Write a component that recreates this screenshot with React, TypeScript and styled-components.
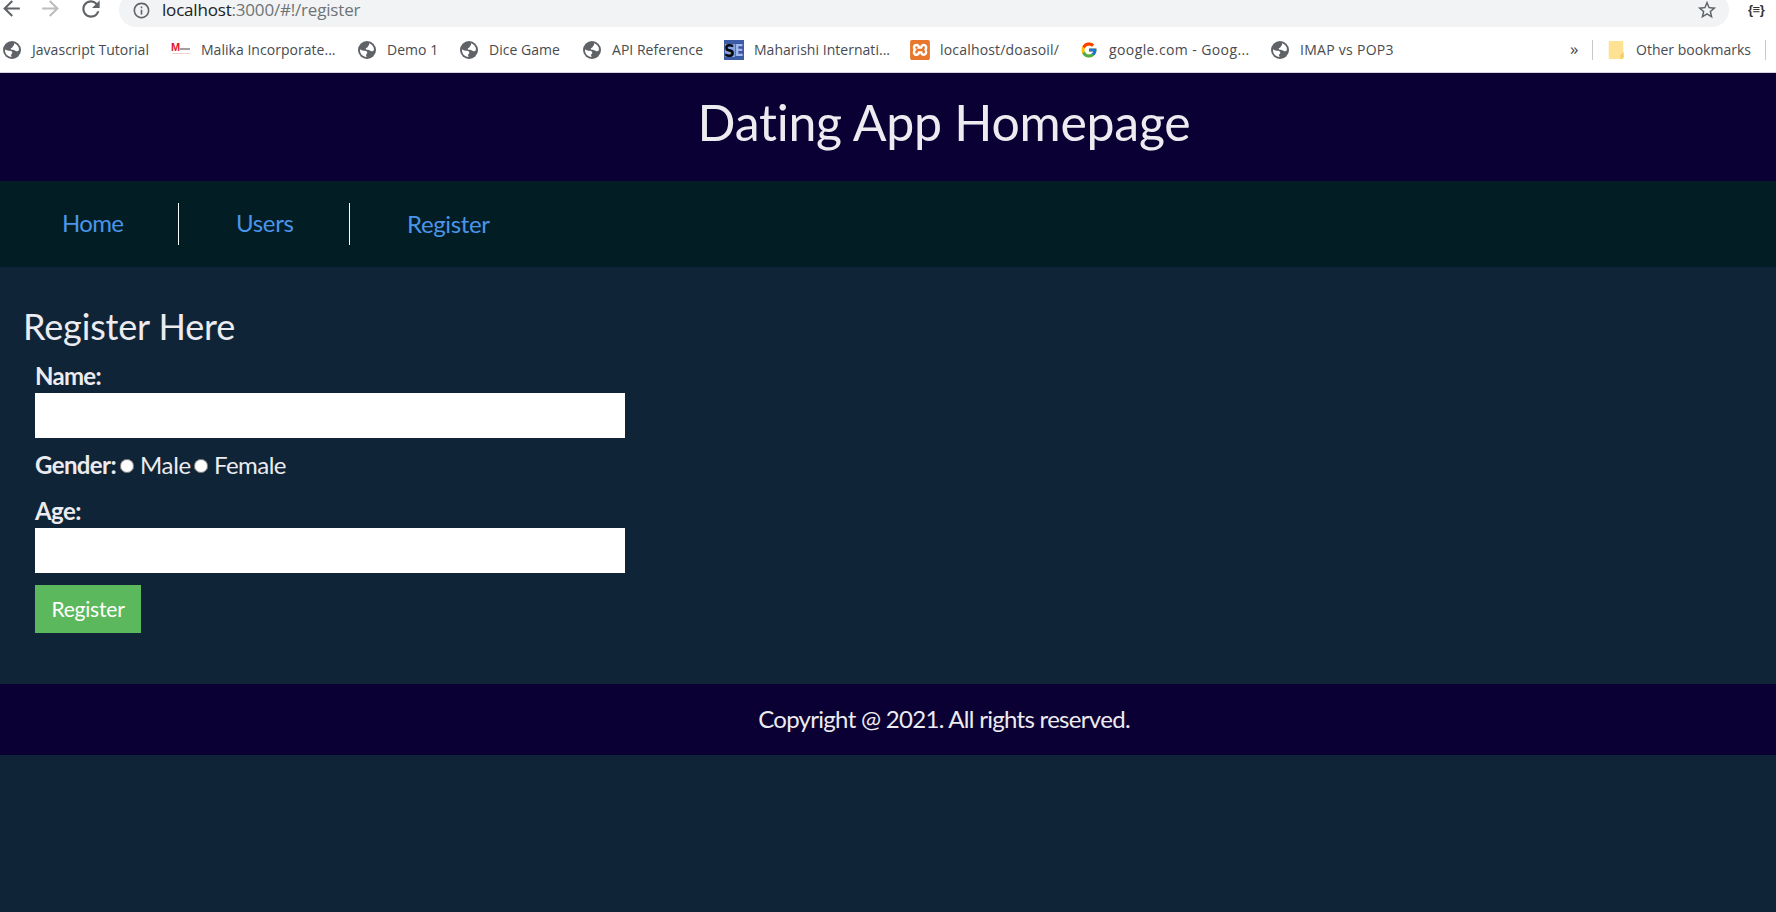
import React from 'react';
import styled, { createGlobalStyle } from 'styled-components';
import { MdArrowBack, MdArrowForward, MdInfoOutline, MdRefresh, MdStarBorder } from 'react-icons/md';
import { FcGoogle } from 'react-icons/fc';
import { SiXampp } from 'react-icons/si';

const GlobalStyle = createGlobalStyle`
  html, body {
    margin: 0;
    height: 912px;
    overflow: hidden;
    background: #102437;
  }
  *, *::before, *::after { box-sizing: border-box; }
`;

/* ---------- Browser chrome ---------- */

const Chrome = styled.div`
  height: 73px;
  background: #fff;
  border-bottom: 1px solid #d5d5e0;
  font-family: 'Open Sans', 'Liberation Sans', sans-serif;
  overflow: hidden;
`;

const Toolbar = styled.div`
  display: flex;
  align-items: center;
  height: 34px;
  margin-top: -7px;
`;

const ToolButton = styled.span<{ $width: number; $color?: string }>`
  display: flex;
  flex: 0 0 ${(p) => p.$width}px;
  padding-bottom: 3px;
  color: ${(p) => p.$color ?? '#5f6368'};

  &:first-child {
    flex-basis: 39px;
    margin-left: -1px;
  }
`;

const Omnibox = styled.div`
  display: flex;
  align-items: center;
  flex: 0 0 1610px;
  height: 34px;
  padding: 0 11px 0 13px;
  border-radius: 17px;
  background: #f1f3f4;
  color: #5f6368;
`;

const Url = styled.span`
  flex: 1;
  margin-left: 11px;
  font-size: 17px;
  line-height: 20px;
  padding-bottom: 1px;
  letter-spacing: -0.19px;
  color: #6f7377;
`;

const Host = styled.span`
  color: #202124;
`;

const Extension = styled.span`
  margin-left: 19px;
  font: bold 13px/18px 'Liberation Sans', sans-serif;
  letter-spacing: -0.5px;
  color: #333;
`;

const Bookmarks = styled.div`
  display: flex;
  align-items: center;
  height: 46px;
  padding-left: 2px;
`;

const Bookmark = styled.div<{ $width: number; $spacing?: number }>`
  display: flex;
  align-items: center;
  gap: 10px;
  flex: 0 0 ${(p) => p.$width}px;
  font-size: 14px;
  line-height: 20px;
  letter-spacing: ${(p) => p.$spacing ?? 0.03}px;
  white-space: nowrap;
  color: #484b50;
`;

const IconSlot = styled.span`
  display: flex;
  align-items: center;
  justify-content: center;
  width: 20px;
  height: 20px;
`;

const Divider = styled.span`
  width: 1px;
  height: 20px;
  background: #c6c9cd;
`;

const Overflow = styled.span`
  flex: 0 0 22px;
  font-size: 17px;
  line-height: 20px;
  padding-bottom: 3px;
  color: #45484c;
`;

const Folder = styled.div`
  display: flex;
  align-items: center;
  gap: 11px;
  margin: 0 14px 0 15px;
  font-size: 14px;
  line-height: 20px;
  white-space: nowrap;
  color: #484b50;
`;

const GlobeIcon = () => (
  <svg width="18" height="18" viewBox="0 0 18 18">
    <circle cx="9" cy="9" r="9" fill="#5f6368" />
    <path d="M11 2.300c3 .8 5 3.400 5 6.400-.8 1.700-2.700 2-4.100.9-.8-.8-1.700-1-3-.9-1.300 0-1.700-1.300-.5-1.800 1.600-.3 1.200-1.500 2-2.200.9-.5.6-1.400.6-2.400z" fill="#fff" />
    <path d="M2 8.600c1.200.3 2.200 1 3.700 1.100 1.600 0 3.300.3 3.600 1.700.2 1.200-1.200 1.500-1.300 2.700 0 .9.700 1.200.6 1.900C4.600 15.900 1.600 12.600 2 8.600z" fill="#fff" />
  </svg>
);

const MalikaIcon = () => (
  <svg width="20" height="20" viewBox="0 0 20 20">
    <text x="0" y="11" fontFamily="Liberation Sans, sans-serif" fontWeight="bold" fontSize="11" fill="#e0202b">M</text>
    <path d="M9 9h10" stroke="#8f8588" strokeWidth="1.600" />
    <path d="M1 13.500h18" stroke="#f3cfd0" strokeWidth="1" />
  </svg>
);

const SeIcon = () => (
  <svg width="20" height="20" viewBox="0 0 20 20">
    <rect width="20" height="20" fill="#3c5ca6" />
    <path d="M1 4h10v13H1z" fill="#8aa3dc" />
    <path d="M11 3h8v14h-8z" fill="#3457a8" />
    <text x="0" y="16.500" fontFamily="DejaVu Sans, sans-serif" fontWeight="bold" fontSize="17" textLength="11" lengthAdjust="spacingAndGlyphs" fill="#06080f">S</text>
    <text x="10.500" y="16" fontFamily="DejaVu Sans, sans-serif" fontWeight="bold" fontSize="16" textLength="9" lengthAdjust="spacingAndGlyphs" fill="#9fb9ee">E</text>
  </svg>
);

const FolderIcon = () => (
  <svg width="17" height="20" viewBox="0 0 17 20">
    <path d="M1.500 1h13a.8.8 0 0 1 .8.8V12h.7v5.500L14 19H1.500a.8.8 0 0 1-.8-.8V1.800a.8.8 0 0 1 .8-.8z" fill="#fde293" />
    <path d="M12.500 19v-4.500l3-2v5L14 19z" fill="#f6cf5f" />
  </svg>
);

type BookmarkEntry = { label: string; width: number; icon: React.ReactNode; spacing?: number };

const bookmarks: BookmarkEntry[] = [
  { label: 'Javascript Tutorial', width: 169, icon: <GlobeIcon /> },
  { label: 'Malika Incorporate...', width: 186, icon: <MalikaIcon /> },
  { label: 'Demo 1', width: 102, icon: <GlobeIcon /> },
  { label: 'Dice Game', width: 123, icon: <GlobeIcon /> },
  { label: 'API Reference', width: 142, icon: <GlobeIcon /> },
  { label: 'Maharishi Internati...', width: 186, icon: <SeIcon /> },
  { label: 'localhost/doasoil/', width: 169, icon: <SiXampp size={20} color="#e8762d" />, spacing: 0.18 },
  { label: 'google.com - Goog...', width: 191, icon: <FcGoogle size={18} />, spacing: 0.4 },
  { label: 'IMAP vs POP3', width: 300, icon: <GlobeIcon />, spacing: 0.28 },
];

/* ---------- Web page ---------- */

const Page = styled.div`
  font-family: Lato, 'Liberation Sans', sans-serif;
  font-size: 24px;
  line-height: 29px;
  font-variant-ligatures: none;
  color: #ebebf0;
`;

const Header = styled.header`
  height: 108px;
  padding: 19px 0 0 112px;
  background: #0b0033;
  text-align: center;
`;

const Title = styled.h1`
  margin: 0;
  font-size: 50px;
  line-height: 60px;
  font-weight: 400;
  letter-spacing: -0.25px;
`;

const Nav = styled.nav`
  display: flex;
  align-items: center;
  height: 86px;
  padding-left: 7px;
  background: #031d25;
`;

const NavItem = styled.a<{ $width: number; $indent: number; $line: number; $spacing: number; $last?: boolean }>`
  flex: 0 0 ${(p) => p.$width}px;
  height: 42px;
  padding-left: ${(p) => p.$indent}px;
  border-right: ${(p) => (p.$last ? 'none' : '1px solid #fff')};
  line-height: ${(p) => p.$line}px;
  letter-spacing: ${(p) => p.$spacing}px;
  color: #4a94ea;
`;

const Main = styled.main`
  height: 417px;
  padding: 37px 0 0 22px;
`;

const Heading = styled.h3`
  margin: 0 0 13px 1px;
  font-size: 36px;
  line-height: 44px;
  font-weight: 400;
  letter-spacing: -0.15px;
`;

const Form = styled.form`
  display: flex;
  flex-direction: column;
  align-items: flex-start;
  margin-left: 13px;
`;

const Label = styled.label<{ $spacing: number }>`
  margin-bottom: 3px;
  font-weight: 700;
  letter-spacing: ${(p) => p.$spacing}px;
`;

const Input = styled.input`
  width: 590px;
  height: 45px;
  padding: 0 12px;
  border: 0;
  border-radius: 0;
  background: #fff;
  font: inherit;
`;

const GenderRow = styled.div`
  display: flex;
  height: 29px;
  margin: 12px 0 17px;
`;

const GenderLabel = styled.span`
  width: 85px;
  font-weight: 700;
  letter-spacing: -0.6px;
`;

const Radio = styled.input`
  width: 14px;
  height: 14px;
  margin: 9px 6px 0 0;
`;

const Option = styled.label<{ $spacing: number; $width: number }>`
  width: ${(p) => p.$width}px;
  letter-spacing: ${(p) => p.$spacing}px;
`;

const Submit = styled.button`
  width: 106px;
  height: 48px;
  margin-top: 12px;
  padding: 0 0 1px;
  border: 0;
  background: #5cb85c;
  color: #fff;
  font: 21px/25px Lato, 'Liberation Sans', sans-serif;
  letter-spacing: -0.2px;
`;

const Footer = styled.footer`
  height: 71px;
  padding: 20px 0 0 112px;
  background: #0b0033;
  text-align: center;
  letter-spacing: -0.7px;
`;

export default function App() {
  return (
    <>
      <GlobalStyle />
      <Chrome>
        <Toolbar>
          <ToolButton $width={40}><MdArrowBack size={25} /></ToolButton>
          <ToolButton $width={40} $color="#babcbe"><MdArrowForward size={25} /></ToolButton>
          <ToolButton $width={41}><MdRefresh size={26} /></ToolButton>
          <Omnibox>
            <MdInfoOutline size={19} />
            <Url><Host>localhost</Host>:3000/#!/register</Url>
            <MdStarBorder size={22} />
          </Omnibox>
          <Extension>{'{≡}'}</Extension>
        </Toolbar>
        <Bookmarks>
          {bookmarks.map((b) => (
            <Bookmark key={b.label} $width={b.width} $spacing={b.spacing}>
              <IconSlot>{b.icon}</IconSlot>
              {b.label}
            </Bookmark>
          ))}
          <Overflow>»</Overflow>
          <Divider />
          <Folder>
            <FolderIcon />
            Other bookmarks
          </Folder>
          <Divider />
        </Bookmarks>
      </Chrome>
      <Page>
        <Header>
          <Title>Dating App Homepage</Title>
        </Header>
        <Nav>
          <NavItem $width={172} $indent={55} $line={39} $spacing={-0.7}>Home</NavItem>
          <NavItem $width={171} $indent={57} $line={39} $spacing={-0.3}>Users</NavItem>
          <NavItem $width={197} $indent={57} $line={41} $spacing={-0.35} $last>Register</NavItem>
        </Nav>
        <Main>
          <Heading>Register Here</Heading>
          <Form>
            <Label htmlFor="name" $spacing={-0.7}>Name:</Label>
            <Input id="name" type="text" />
            <GenderRow>
              <GenderLabel>Gender:</GenderLabel>
              <Radio id="male" type="radio" name="gender" />
              <Option htmlFor="male" $width={54} $spacing={-0.3}>Male</Option>
              <Radio id="female" type="radio" name="gender" />
              <Option htmlFor="female" $width={80} $spacing={-0.55}>Female</Option>
            </GenderRow>
            <Label htmlFor="age" $spacing={-0.6}>Age:</Label>
            <Input id="age" type="text" />
            <Submit type="button">Register</Submit>
          </Form>
        </Main>
        <Footer>Copyright @ 2021. All rights reserved.</Footer>
      </Page>
    </>
  );
}
